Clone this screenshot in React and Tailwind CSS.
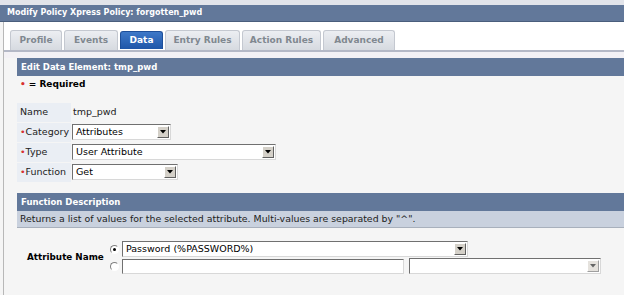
import clsx from 'clsx';

const tabs = [
  { label: 'Profile', w: 'w-[52px]' },
  { label: 'Events', w: 'w-[54px]' },
  { label: 'Data', w: 'w-[43px]', active: true },
  { label: 'Entry Rules', w: 'w-[75px]' },
  { label: 'Action Rules', w: 'w-[79px]' },
  { label: 'Advanced', w: 'w-[72px]' },
];

function Select({ value, className, disabled }) {
  return (
    <div
      className={clsx(
        'flex h-[16px] items-center border border-t-[#707070] border-l-[#707070] border-r-[#d8d8d8] border-b-[#d8d8d8] bg-white',
        className
      )}
    >
      <span className="flex-1 truncate pl-[3px] text-[9.5px] text-black">{value}</span>
      <span
        className={clsx(
          'mr-[1px] flex h-[12px] w-[12px] items-center justify-center border border-t-white border-l-white border-r-[#606060] border-b-[#606060] bg-[#d4d0c8]',
          disabled && 'opacity-60'
        )}
      >
        <svg width="6" height="4" viewBox="0 0 6 4">
          <path d="M0 0h6L3 3.5z" fill="#000" />
        </svg>
      </span>
    </div>
  );
}

function Row({ label, required, children }) {
  return (
    <div className="flex h-[20px] items-center">
      <div className="flex h-[19px] w-[54px] items-center bg-[#eaeef4] pl-[3px] text-[9.5px] text-[#222]">
        {required && <span className="text-[#d83030]">•</span>}
        {label}
      </div>
      <div className="ml-[1px] flex items-center">{children}</div>
    </div>
  );
}

function Radio({ checked }) {
  return (
    <span className="flex h-[9px] w-[9px] items-center justify-center rounded-full border border-t-[#808080] border-l-[#808080] border-r-white border-b-white bg-white">
      {checked && <span className="h-[3px] w-[3px] rounded-full bg-black" />}
    </span>
  );
}

export default function App() {
  return (
    <div
      className="flex h-[295px] w-[624px] flex-col overflow-hidden bg-[#f5f5f5]"
      style={{ fontFamily: '"DejaVu Sans", Verdana, sans-serif' }}
    >
      <div className="h-[5px] bg-[#e2e4ea]" />
      {/* Title bar */}
      <div className="flex h-[17px] items-center border-b border-[#4a5e7c] bg-[#62789a] pl-[7px] text-[8px] font-bold text-white">
        Modify Policy Xpress Policy: forgotten_pwd
      </div>

      <div className="ml-[3px] flex flex-1 flex-col border-l border-[#b8b8b8]">
        {/* Tabs */}
        <div className="flex h-[30px] items-end gap-[2px] border-b-2 border-[#b4b8c6] bg-white pl-[6px]">
          {tabs.map((t) => (
            <div
              key={t.label}
              className={clsx(
                'flex items-center justify-center rounded-t-[3px] border border-b-0 text-[9px] font-bold',
                t.w,
                t.active
                  ? 'mb-[1px] h-[18px] border-[#1d4f9a] bg-gradient-to-b from-[#3d78c8] to-[#1f56a8] text-white'
                  : 'h-[20px] border-[#c4c8d0] bg-gradient-to-b from-[#eceef2] to-[#d6dae0] text-[#808890]'
              )}
            >
              {t.label}
            </div>
          ))}
        </div>
        <div className="h-[6px] bg-[#f3f1f5]" />

        <div className="flex flex-1 flex-col pl-[13px]">
          {/* Edit data element */}
          <div className="flex h-[18px] items-center bg-[#62789a] pl-[4px] text-[8.5px] font-bold text-white">
            Edit Data Element: tmp_pwd
          </div>
          <div className="mt-[2px] flex h-[14px] items-center pl-[3px] text-[9px] font-bold text-black">
            <span className="mr-[3px] text-[#d83030]">•</span>= Required
          </div>

          <div className="mt-[10px] flex flex-col">
            <Row label="Name">
              <span className="pl-[1px] text-[9.5px] text-[#222]">tmp_pwd</span>
            </Row>
            <Row label="Category" required>
              <Select value="Attributes" className="w-[99px]" />
            </Row>
            <Row label="Type" required>
              <Select value="User Attribute" className="w-[204px]" />
            </Row>
            <Row label="Function" required>
              <Select value="Get" className="w-[106px]" />
            </Row>
          </div>

          {/* Function description */}
          <div className="mt-[11px] flex h-[18px] items-center bg-[#62789a] pl-[4px] text-[8.5px] font-bold text-white">
            Function Description
          </div>
          <div className="flex h-[17px] items-center border-b border-[#a8b0bc] bg-[#c9d1de] pl-[3px] text-[9.4px] text-[#222]">
            Returns a list of values for the selected attribute. Multi-values are separated by "^".
          </div>

          <div className="mt-[13px] flex items-center">
            <div className="w-[93px] pl-[10px] text-[8.8px] font-bold text-black">Attribute Name</div>
            <div className="flex flex-col gap-[1px]">
              <div className="flex items-center gap-[3px]">
                <Radio checked />
                <Select value="Password (%PASSWORD%)" className="w-[346px]" />
              </div>
              <div className="flex items-center gap-[3px]">
                <Radio />
                <div className="h-[15px] w-[282px] border border-t-[#707070] border-l-[#707070] border-r-[#d8d8d8] border-b-[#d8d8d8] bg-white" />
                <Select value="" className="ml-[2px] w-[192px]" disabled />
              </div>
            </div>
          </div>
        </div>
      </div>
    </div>
  );
}
